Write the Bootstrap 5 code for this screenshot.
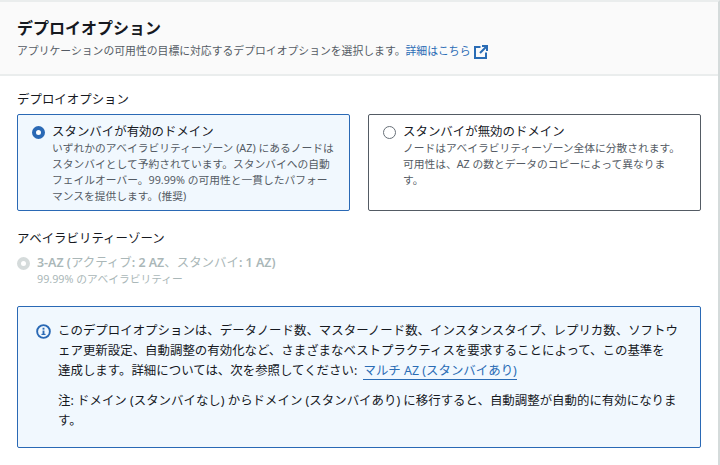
<!DOCTYPE html>
<html lang="ja">
<head>
  <meta charset="UTF-8">
  <meta name="viewport" content="width=device-width, initial-scale=1">
  <title>デプロイオプション</title>
  <link href="https://cdn.jsdelivr.net/npm/bootstrap@5.3.0/dist/css/bootstrap.min.css" rel="stylesheet">
  <style>
    html, body { height: 100%; }
    body { background: #fff; color: #16191f; font-family: "Noto Sans", "Noto Sans CJK JP", sans-serif; font-size: 12.44px; line-height: 16px; overflow: hidden; }
    .panel-wrap { width: 718px; height: 465px; border-top: 2px solid #eaeded; border-right: 2px solid #d5dbdb; box-sizing: content-box; }
    .panel-head { background: #fafafa; border-bottom: 2px solid #eaeded; height: 74px; padding: 16px 17px 0; }
    .panel-title { font-size: 16px; line-height: 20px; font-weight: 700; margin: 0 0 4px; }
    .panel-desc { font-size: 10.84px; line-height: 17px; color: #545b64; margin: 0; }
    .panel-desc a, .note-link { color: #2a6cb5; text-decoration: none; }
    .ext-icon { width: 14px; height: 14px; margin-left: 4px; vertical-align: -4px; }
    .panel-body { padding: 15px 17px 0; }
    .field-label { font-size: 12.44px; line-height: 18px; margin-bottom: 5px; }
    .tile-row { display: grid; grid-template-columns: 333px 333px; gap: 18px; height: 97px; margin-bottom: 19px; }
    .tile { border: 1px solid #545b64; border-radius: 2px; padding: 9px 14px 0; display: flex; gap: 7px; }
    .tile-on { border-color: #2a69b5; background: #f1f8fe; }
    .tile-body { width: 281px; }
    .tile-on .tile-body { width: 284px; }
    .tile-title { font-size: 12.44px; line-height: 16px; }
    .tile-text { font-size: 10.75px; line-height: 16px; color: #545b64; }
    .mock-radio { flex: none; width: 13px; height: 13px; border-radius: 50%; margin-top: 2px; }
    .mock-radio-on { border: 4px solid #2a69b5; background: #fff; }
    .mock-radio-off { border: 1px solid #687078; background: #fff; }
    .mock-radio-dis { border: 4px solid #d5dbdb; background: #fff; }
    .az-row { display: flex; gap: 7px; margin-top: 7px; margin-bottom: 19px; color: #aab7b8; }
    .az-title { font-size: 12.44px; line-height: 16px; font-weight: 600; }
    .az-jp { font-weight: 400; }
    .az-text { font-size: 10.75px; line-height: 16px; }
    .note-box { width: 684px; height: 142px; border: 1px solid #2a69b5; border-radius: 2px; background: #f1f8fe; padding: 14px 19px 0 18px; display: flex; gap: 7px; }
    .info-icon { flex: none; width: 15px; height: 15px; margin-top: 3px; }
    .note-box p { font-size: 12.44px; line-height: 20px; margin: 0 0 10px; }
    .note-link { border-bottom: 1px solid #2a6cb5; margin-left: 3px; }
  </style>
</head>
<body>
  <div class="panel-wrap">
    <div class="panel-head">
      <h2 class="panel-title">デプロイオプション</h2>
      <p class="panel-desc">アプリケーションの可用性の目標に対応するデプロイオプションを選択します。<a href="#">詳細はこちら<svg class="ext-icon" viewBox="0 0 14 14" fill="none" stroke="#2a6cb5" stroke-width="2"><path d="M6.5 2H1v11h11V7.5"/><path d="M6 8 13 1M8 1h5v5"/></svg></a></p>
    </div>
    <div class="panel-body">
      <div class="field-label">デプロイオプション</div>
      <div class="tile-row">
        <div class="tile tile-on">
          <span class="mock-radio mock-radio-on"></span>
          <div class="tile-body">
            <div class="tile-title">スタンバイが有効のドメイン</div>
            <div class="tile-text">いずれかのアベイラビリティーゾーン (AZ) にあるノードはスタンバイとして予約されています。スタンバイへの自動フェイルオーバー。99.99% の可用性と一貫したパフォーマンスを提供します。(推奨)</div>
          </div>
        </div>
        <div class="tile">
          <span class="mock-radio mock-radio-off"></span>
          <div class="tile-body">
            <div class="tile-title">スタンバイが無効のドメイン</div>
            <div class="tile-text">ノードはアベイラビリティーゾーン全体に分散されます。可用性は、AZ の数とデータのコピーによって異なります。</div>
          </div>
        </div>
      </div>
      <div class="field-label mb-0">アベイラビリティーゾーン</div>
      <div class="az-row">
        <span class="mock-radio mock-radio-dis"></span>
        <div>
          <div class="az-title">3-AZ (<span class="az-jp">アクティブ</span>: 2 AZ<span class="az-jp">、スタンバイ</span>: 1 AZ)</div>
          <div class="az-text">99.99% のアベイラビリティー</div>
        </div>
      </div>
      <div class="note-box">
        <svg class="info-icon" viewBox="0 0 16 16" fill="none"><circle cx="8" cy="8" r="6.8" stroke="#2a69b5" stroke-width="2"/><rect x="7" y="7" width="2" height="4.5" fill="#2a69b5"/><rect x="5.8" y="10.5" width="4.4" height="1.2" fill="#2a69b5"/><rect x="7" y="4" width="2" height="2" fill="#2a69b5"/></svg>
        <div>
          <p>このデプロイオプションは、データノード数、マスターノード数、インスタンスタイプ、レプリカ数、ソフトウェア更新設定、自動調整の有効化など、さまざまなベストプラクティスを要求することによって、この基準を<span class="text-nowrap">達成</span>します。詳細については、次を参照してください: <a class="note-link" href="#">マルチ AZ (スタンバイあり)</a></p>
          <p>注: ドメイン (スタンバイなし) からドメイン (スタンバイあり) に移行すると、自動調整が自動的に有効になります。</p>
        </div>
      </div>
    </div>
  </div>
  <script src="https://cdn.jsdelivr.net/npm/bootstrap@5.3.0/dist/js/bootstrap.bundle.min.js"></script>
</body>
</html>
